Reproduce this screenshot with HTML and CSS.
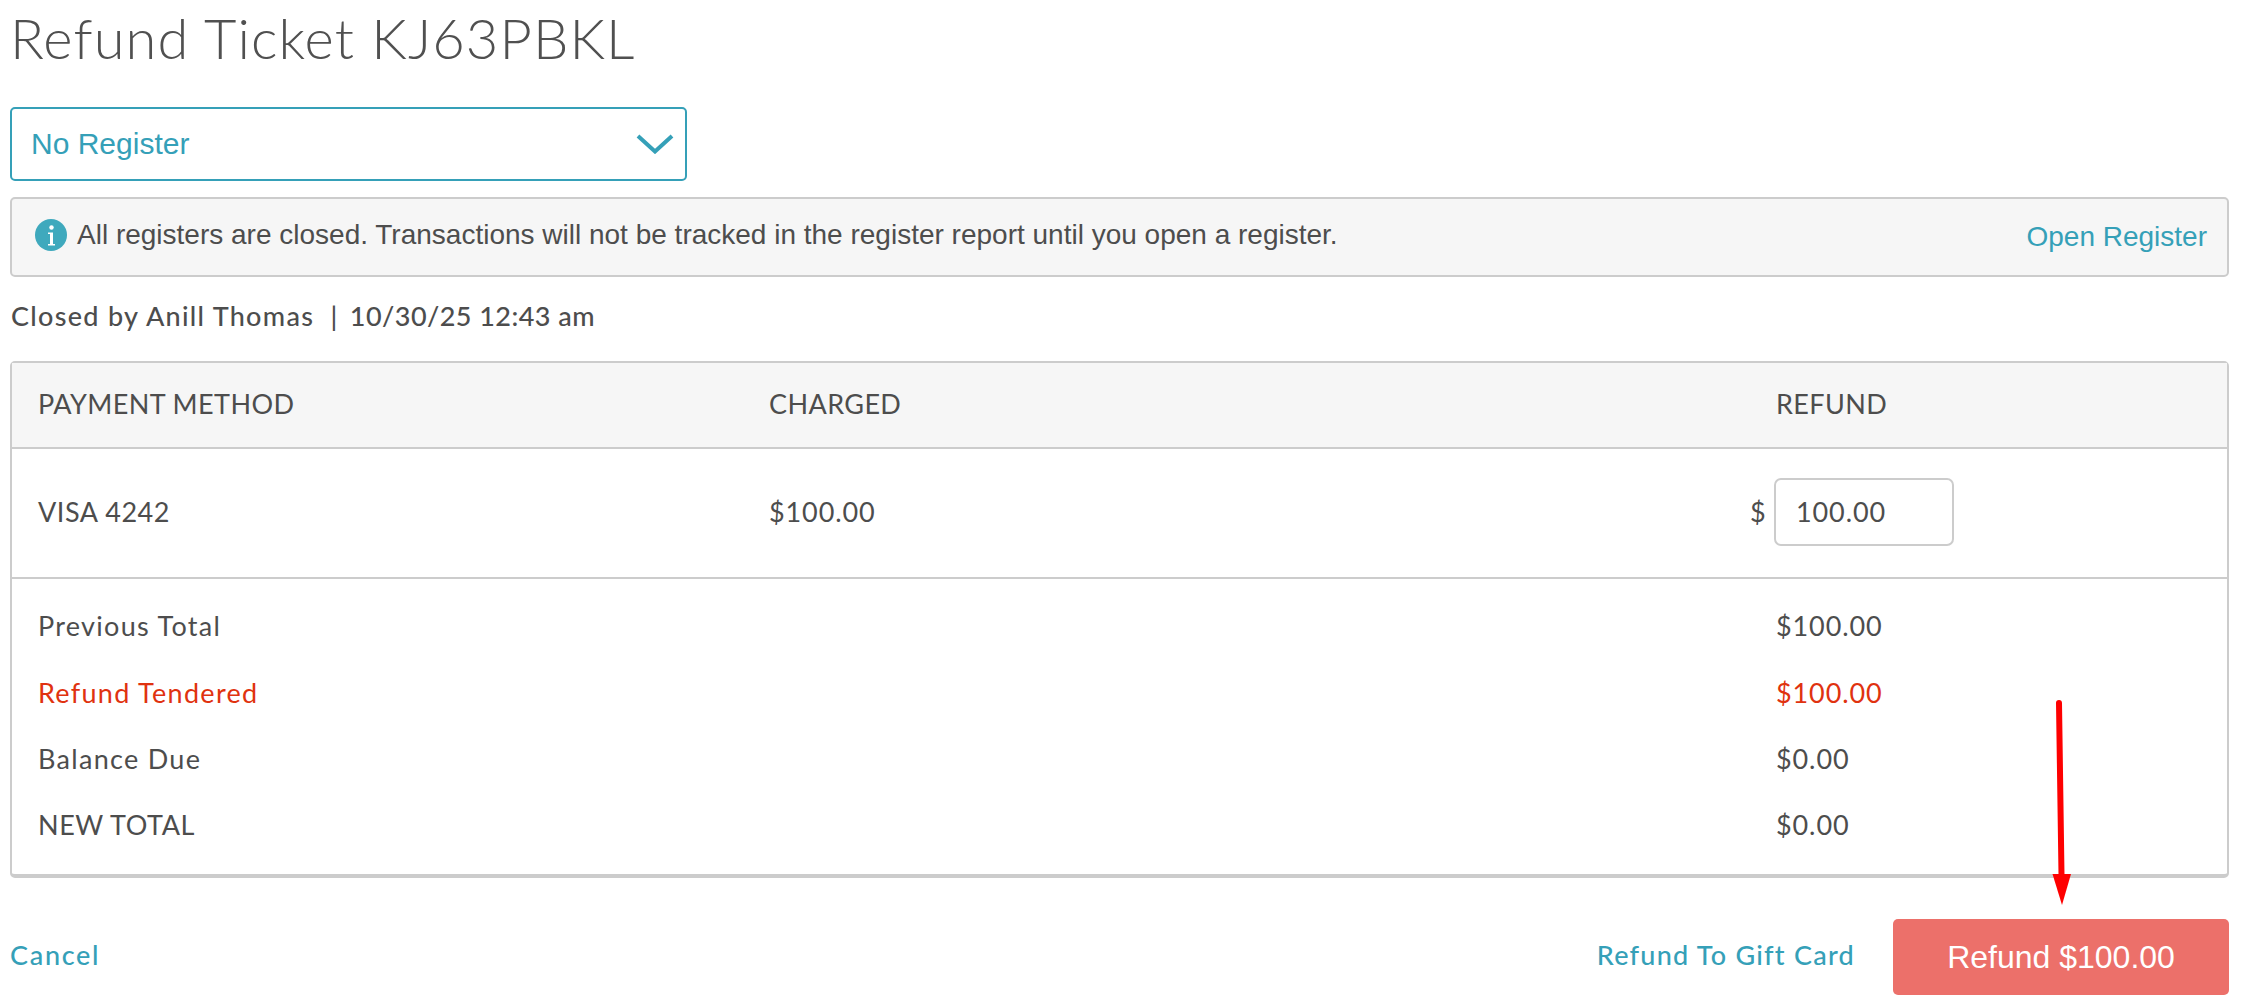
FILE: index.html
```html
<!DOCTYPE html>
<html lang="en">
<head>
<meta charset="utf-8">
<title>Refund Ticket KJ63PBKL</title>
<link rel="stylesheet" href="styles.css">
</head>
<body>
<main class="page">
  <h1 class="title">Refund Ticket KJ63PBKL</h1>
  <div class="select">
    <span>No Register</span>
    <svg class="chevron" width="38" height="20" viewBox="0 0 38 20"><path d="M2 2 L19 17.5 L36 2" fill="none" stroke="#35a0b8" stroke-width="4"/></svg>
  </div>
  <div class="alert">
    <div class="alert-msg">
      <svg class="info" width="32" height="32" viewBox="0 0 32 32"><circle cx="16" cy="16" r="16" fill="#3fa9bd"/><circle cx="16.5" cy="8.5" r="2.2" fill="#fff"/><path d="M13 13.5h5v11.5h2v1.6h-7v-1.6h2v-9.900h-2z" fill="#fff"/></svg>
      <span>All registers are closed. Transactions will not be tracked in the register report until you open a register.</span>
    </div>
    <a class="alert-link">Open Register</a>
  </div>
  <p class="closed"><span class="closed-by">Closed by Anill Thomas &nbsp;|&nbsp; </span><span class="closed-at">10/30/25 12:43 am</span></p>
  <section class="card">
    <div class="row head">
      <span>PAYMENT METHOD</span><span>CHARGED</span><span>REFUND</span>
    </div>
    <div class="row pay">
      <span class="caps">VISA 4242</span><span class="num">$100.00</span>
      <span class="refund-cell"><span class="cur">$</span><span class="input num">100.00</span></span>
    </div>
    <div class="totals">
      <div class="row line"><span class="lbl">Previous Total</span><span></span><span class="num">$100.00</span></div>
      <div class="row line red"><span class="lbl">Refund Tendered</span><span></span><span class="num">$100.00</span></div>
      <div class="row line"><span class="lbl">Balance Due</span><span></span><span class="num">$0.00</span></div>
      <div class="row line"><span class="caps">NEW TOTAL</span><span></span><span class="num">$0.00</span></div>
    </div>
  </section>
  <footer class="actions">
    <a class="link cancel">Cancel</a>
    <div class="actions-right">
      <a class="link">Refund To Gift Card</a>
      <button class="refund-btn">Refund $100.00</button>
    </div>
  </footer>
  <svg class="arrow" width="30" height="210" viewBox="0 0 30 210"><path d="M12 4 L14.500 176" fill="none" stroke="#fe0000" stroke-width="6" stroke-linecap="round"/><path d="M5.500 175 H24 L15 206 Z" fill="#fe0000"/></svg>
</main>
</body>
</html>
```
FILE: styles.css
```css
* { box-sizing: border-box; }
html, body { margin: 0; background: #fff; }
body { font-family: "Lato", "Liberation Sans", sans-serif; color: #4d4d4d; }
.page { position: relative; width: 2242px; height: 1007px; padding: 0 13px 0 10px; overflow: hidden; }
.title { margin: 0; height: 107px; padding-top: 5px; font-size: 56px; line-height: 66px; font-weight: 300; letter-spacing: 1.1px; color: #505050; }
.select { display: flex; align-items: center; justify-content: space-between; width: 677px; height: 74px; padding: 0 11px 0 19px; border: 2px solid #35a0b8; border-radius: 5px; color: #35a0b8; font-family: "Liberation Sans", sans-serif; font-size: 30px; }
.alert { display: flex; align-items: center; justify-content: space-between; height: 80px; margin-top: 16px; padding: 0 20px 0 23px; background: #f6f6f6; border: 2px solid #ccc; border-radius: 5px; font-family: "Liberation Sans", sans-serif; font-size: 28px; }
.alert-msg { display: flex; align-items: center; gap: 10px; margin-top: -4px; }
.info { flex: none; }
.alert-link { color: #35a0b8; font-size: 28px; }
.closed { margin: 0; height: 84px; padding-top: 21px; padding-left: 1px; font-size: 27px; line-height: 36px; font-weight: 500; }
.closed-by { letter-spacing: 1.3px; }
.closed-at { margin-left: -5px; letter-spacing: 0.45px; }
.card { height: 517px; border: 2px solid #ccc; border-bottom-width: 4px; border-radius: 5px; font-size: 27px; }
.row { display: grid; grid-template-columns: 731px 1007px 1fr; align-items: center; padding: 0 0 3px 26px; }
.head { height: 86px; padding-bottom: 4px; background: #f6f6f6; border-bottom: 2px solid #ccc; letter-spacing: 0.4px; }
.pay { height: 130px; border-bottom: 2px solid #ccc; }
.refund-cell { display: flex; align-items: center; margin-left: -26px; }
.cur { width: 24px; }
.input { display: flex; align-items: center; width: 180px; height: 68px; padding-left: 20px; border: 2px solid #ccc; border-radius: 7px; }
.num { letter-spacing: 0.9px; }
.caps { letter-spacing: 0.55px; }
.lbl { letter-spacing: 1.3px; }
.totals { padding-top: 15px; }
.line { height: 66.4px; }
.red { color: #e0320f; }
.actions { display: flex; align-items: center; justify-content: space-between; margin-top: 41px; }
.actions-right { display: flex; align-items: center; gap: 38px; }
.link { color: #35a0b8; font-size: 27px; font-weight: 500; letter-spacing: 1.25px; margin-top: -5px; }
.cancel { letter-spacing: 1.7px; }
.refund-btn { width: 336px; height: 76px; border: 0; border-radius: 5px; background: #ec706a; color: #fff; font-family: "Liberation Sans", sans-serif; font-size: 32px; }
.arrow { position: absolute; left: 2047px; top: 699px; }
```
